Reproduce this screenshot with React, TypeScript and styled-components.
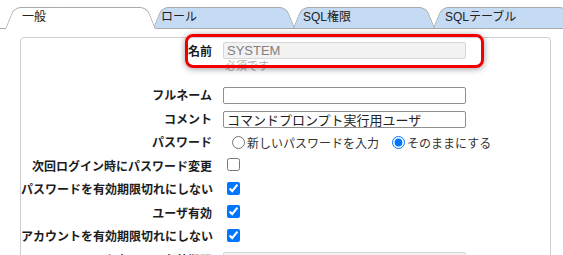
import styled, { createGlobalStyle } from 'styled-components';

const GlobalStyle = createGlobalStyle`
  body {
    margin: 0;
    background: #fff;
    font-family: 'Liberation Sans', 'Noto Sans CJK JP', sans-serif;
    color: #222;
  }
`;

const TabBar = styled.div`
  display: flex;
  align-items: flex-end;
  height: 21px;
  padding: 7px 0 0 5px;
  border-bottom: 1px solid #a9a9a9;
`;

const Tab = styled.div<{ $active?: boolean; $width: number; $pad: number; $z: number }>`
  position: relative;
  z-index: ${(p) => (p.$active ? 10 : p.$z)};
  width: ${(p) => p.$width}px;
  height: ${(p) => (p.$active ? 22 : 21)}px;
  margin-bottom: ${(p) => (p.$active ? -1 : 0)}px;
  margin-left: -2px;
  padding-left: ${(p) => p.$pad}px;
  box-sizing: border-box;
  font-size: 12px;
  line-height: 21px;
  color: #222;
  flex-shrink: 0;

  &:first-child {
    margin-left: 0;
  }

  &::before,
  &::after {
    content: '';
    position: absolute;
    top: 0;
    bottom: 0;
    width: 55%;
    background: ${(p) => (p.$active ? '#fff' : '#c5daf3')};
    border: 1px solid #a9a9a9;
    border-bottom: none;
    z-index: -1;
  }

  &::before {
    left: 0;
    border-right: none;
    border-radius: 7px 0 0 0;
    transform: skewX(-22deg);
    transform-origin: bottom left;
  }

  &::after {
    right: 0;
    border-left: none;
    border-radius: 0 7px 0 0;
    transform: skewX(22deg);
    transform-origin: bottom right;
  }
`;

const Panel = styled.div`
  position: relative;
  width: 531px;
  margin: 8px 0 0 20px;
  padding-top: 4px;
  box-sizing: border-box;
  border: 1px solid #cfcfcf;
  border-radius: 4px;
`;

const Row = styled.div`
  display: grid;
  grid-template-columns: 191px 1fr;
  column-gap: 11px;
  align-items: center;
  height: 23.5px;
`;

const NameRow = styled(Row)`
  align-items: start;
  height: auto;
  padding-bottom: 12px;
`;

const Label = styled.div`
  font-size: 12px;
  font-weight: bold;
  text-align: right;
  white-space: nowrap;
  color: #1c1c1c;
  line-height: 17px;
  padding-top: 2px;
`;

const Field = styled.div`
  display: flex;
  flex-direction: column;
`;

const TextInput = styled.input`
  width: 243px;
  height: 17px;
  box-sizing: border-box;
  padding: 0 3px;
  border: 1px solid #8f8f8f;
  border-radius: 2px;
  font-family: 'Liberation Sans', 'Noto Sans CJK JP', sans-serif;
  font-size: 13px;
  color: #222;
  background: #fff;

  &:disabled {
    background: #f2f2f2;
    border-color: #d6d6d6;
    color: #808080;
  }
`;

const Hint = styled.div`
  margin-top: 1px;
  padding-left: 2px;
  font-size: 11px;
  line-height: 12px;
  color: #b0b0b0;
`;

const RadioGroup = styled.div`
  display: flex;
  align-items: center;
  padding-left: 4px;
`;

const RadioLabel = styled.label`
  display: inline-flex;
  align-items: center;
  font-size: 12px;
  color: #333;

  & + & {
    margin-left: 8px;
  }

  input {
    margin: 0 2px 0 5px;
  }
`;

const Check = styled.input`
  margin: 0 0 0 4px;
  width: 13px;
  height: 13px;
`;

const Highlight = styled.div`
  position: absolute;
  left: 164px;
  top: -4px;
  width: 299px;
  height: 34px;
  box-sizing: border-box;
  border: 3px solid #f20000;
  border-radius: 8px;
  box-shadow: 0 1px 6px rgba(0, 0, 0, 0.4);
  pointer-events: none;
`;

const tabs = [
  { label: '一般', width: 150, pad: 17 },
  { label: 'ロール', width: 142, pad: 8 },
  { label: 'SQL権限', width: 142, pad: 10 },
  { label: 'SQLテーブル', width: 142, pad: 12 },
];

const checks = [
  { label: '次回ログイン時にパスワード変更', checked: false },
  { label: 'パスワードを有効期限切れにしない', checked: true },
  { label: 'ユーザ有効', checked: true },
  { label: 'アカウントを有効期限切れにしない', checked: true },
];

const App = () => {
  return (
    <>
      <GlobalStyle />
      <TabBar>
        {tabs.map((t, i) => (
          <Tab key={t.label} $active={i === 0} $width={t.width} $pad={t.pad} $z={i + 1}>
            {t.label}
          </Tab>
        ))}
      </TabBar>
      <Panel>
        <NameRow>
          <Label>名前</Label>
          <Field>
            <TextInput type="text" defaultValue="SYSTEM" disabled />
            <Hint>必須です</Hint>
          </Field>
        </NameRow>
        <Row>
          <Label>フルネーム</Label>
          <TextInput type="text" defaultValue="" />
        </Row>
        <Row>
          <Label>コメント</Label>
          <TextInput type="text" defaultValue="コマンドプロンプト実行用ユーザ" />
        </Row>
        <Row>
          <Label>パスワード</Label>
          <RadioGroup>
            <RadioLabel>
              <input type="radio" name="pw" />
              新しいパスワードを入力
            </RadioLabel>
            <RadioLabel>
              <input type="radio" name="pw" defaultChecked />
              そのままにする
            </RadioLabel>
          </RadioGroup>
        </Row>
        {checks.map((c) => (
          <Row key={c.label}>
            <Label>{c.label}</Label>
            <div>
              <Check type="checkbox" defaultChecked={c.checked} />
            </div>
          </Row>
        ))}
        <Row>
          <Label>アカウントの有効期限</Label>
          <TextInput type="text" defaultValue="" disabled />
        </Row>
        <Highlight />
      </Panel>
    </>
  );
};

export default App;
